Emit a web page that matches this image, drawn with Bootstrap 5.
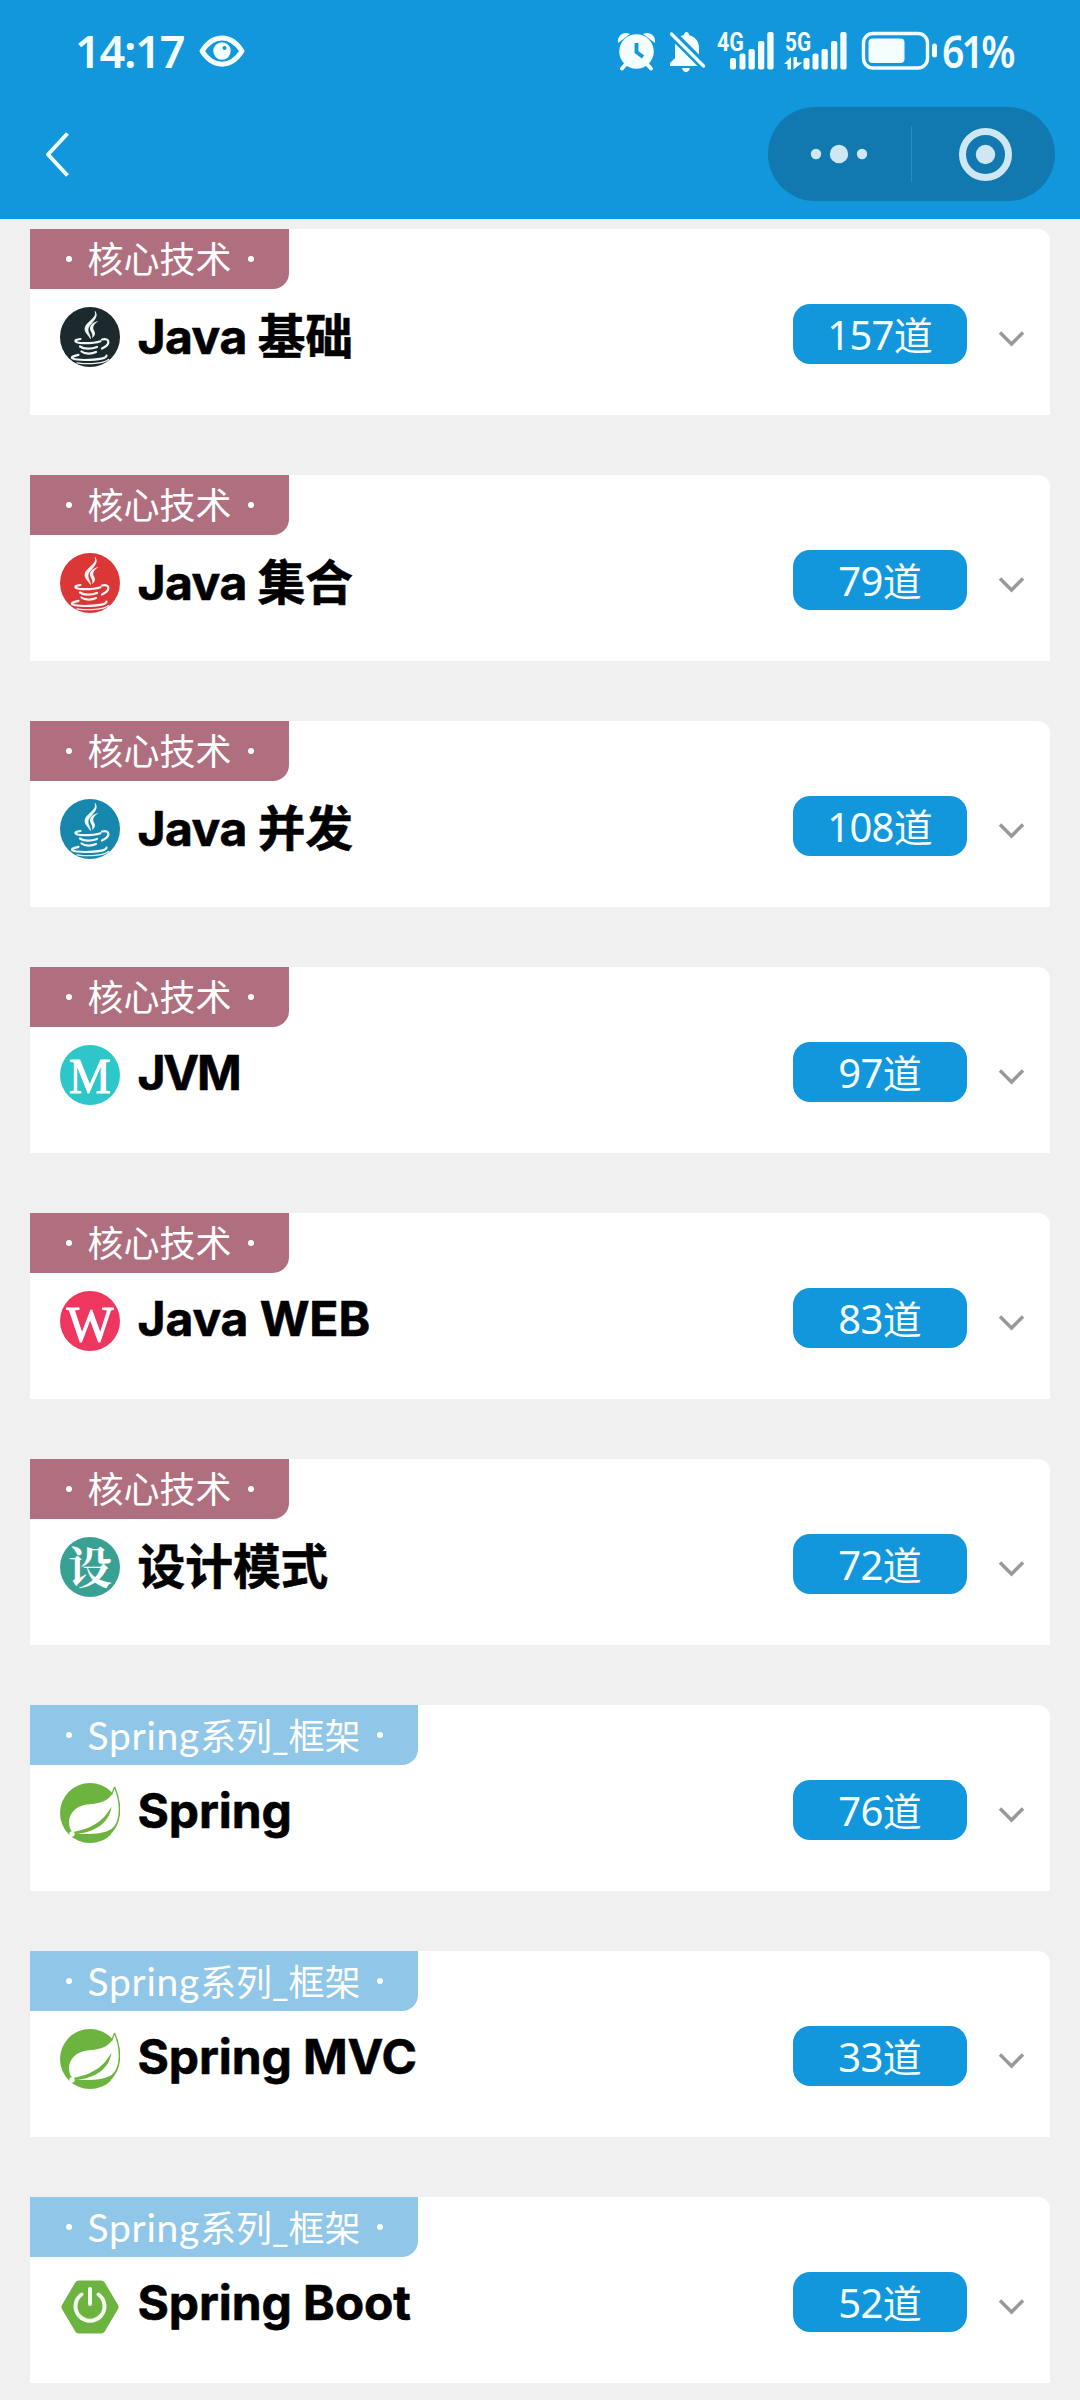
<!DOCTYPE html>
<html lang="zh-CN">
<head>
<meta charset="utf-8">
<meta name="viewport" content="width=device-width, initial-scale=1">
<title>Java 题库</title>
<link href="https://cdn.jsdelivr.net/npm/bootstrap@5.3.0/dist/css/bootstrap.min.css" rel="stylesheet">
<style>
body{background:#f0f0f0;font-family:"Noto Sans","Noto Sans CJK SC",sans-serif;overflow-x:hidden}
svg{display:block;flex:none;overflow:visible}
.topbar{background:#1296dc;height:219px;color:#f4feff}
.statusline{height:102px;padding:0 66px 0 75px}
.clock{font-size:45px;font-weight:600;line-height:60px;letter-spacing:-1.2px;width:124px;white-space:nowrap}
.percent{font-size:45px;font-weight:600;line-height:60px;letter-spacing:-3.2px;margin-left:4px;white-space:nowrap;width:72px;transform:scaleX(.87);transform-origin:0 50%}
.navline{height:117px;padding:5px 25px 18px 44px}
.capsule{width:287px;height:94px;background:#1178b0;border-radius:47px}
.back{margin-top:22px}
.topics{padding:10px 30px 0;gap:60px}
.topic{height:186px;background:#fff;border-radius:0 12px 0 0}
.tag{height:60px;border-radius:0 0 16px 0;font:400 36px/58px "Lato","Noto Sans CJK SC",sans-serif;color:#fff;padding:0 35px 0 36px;white-space:nowrap}
.tag i{width:6px;height:6px;border-radius:50%;background:#fff}
.tag b{font-weight:400;text-align:center;width:147px;margin:0 15px 0 14px}
.core{background:#af6f7f}
.spring{background:#90c7e8}
.spring b{width:276px}
.spring .lat{font-size:39px;letter-spacing:.7px}
.line{padding:15px 25.5px 0 30px}
.name{font:700 48px/61px "Inter","Noto Sans CJK SC",sans-serif;color:#000;margin-left:17.5px;white-space:nowrap;letter-spacing:-.1px;-webkit-text-stroke:.6px #000}
.name.snug{letter-spacing:-2.2px}
.name .han{font:700 47.7px/59px "Noto Sans CJK SC",sans-serif;letter-spacing:0}
.name.mixed{line-height:58px;letter-spacing:-.5px}
.pill{width:174px;height:60px;border-radius:17px;background:#1296dc;color:#f4feff;font:400 40px/58px "Noto Sans","Noto Sans CJK SC",sans-serif;letter-spacing:-.7px;text-align:center;white-space:nowrap}
.pill .han{font:400 39px/58px "Noto Sans CJK SC",sans-serif;letter-spacing:0}
.arrow{margin-left:30.5px;margin-top:26px}
.logo{margin-top:3px}
</style>
<script src="https://cdn.jsdelivr.net/npm/bootstrap@5.3.0/dist/js/bootstrap.bundle.min.js"></script>
</head>
<body>
<svg width="0" height="0" class="position-absolute">
<defs>
<symbol id="java" viewBox="0 0 60 60">
<circle cx="30" cy="30" r="30" fill="currentColor"/>
<g fill="#f2f6f6">
<path d="M35.200 4.500C38 11 25.500 15 25 21.500C24.800 25.500 28 27.500 30.500 31.500C29.800 27 27.500 25 28 22C29 16.500 39.500 11.500 35.200 4.500Z" stroke="#f2f6f6" stroke-width=".8"/>
<path d="M38.500 14C33 15 29.500 18.500 30 22C30.300 25 33.500 26.500 32 31C37 27.500 34.500 24.500 33.500 22.500C32.500 19.500 34.500 16.500 38.500 14Z"/>
</g>
<g fill="none" stroke="#f2f6f6" stroke-width="2.200" stroke-linecap="round">
<path d="M20.500 32C12 33 15 36 23 36.200C30 36.300 36 35.800 40.500 34.200"/>
<path d="M42 32.500C50 30.500 51 37.500 42 41.500"/>
<path d="M20 39.500C24 42.500 32 42 37 40"/>
<path d="M21.500 44.500C25 47.300 32 47 36 45"/>
<path d="M18.500 47.800C6 50.500 13 53 25 53C36 53 46.500 51.500 46.500 48.500"/>
<path d="M17 55.800C28 57.500 43 57 48.500 52.500" stroke-width="1.300"/>
</g>
</symbol>
<symbol id="leaf" viewBox="0 0 60 60">
<circle cx="30" cy="30" r="30" fill="#6db33f"/>
<path d="M50.500 9L54.500 3.500L60 0V60H50L51 50C59 40 61 23 54.500 4Z" fill="#fff"/>
<path d="M51 49C50 53 46 56 42 57.500L40 50Z" fill="#6db33f"/>
<path d="M54.300 4.200C51.500 18 41 20.500 27 21.500C17 22.500 9 30 9 39C9 44 10.500 48 14 50.500C27 51.500 43 51.500 51.500 46C61 38 60 20 54.300 4.200Z" fill="#fff"/>
<path d="M54.500 4C61.500 20 62 38 51 50" fill="none" stroke="#6db33f" stroke-width="1.500"/>
<path d="M54.500 4L51.500 12" fill="none" stroke="#6db33f" stroke-width="1.300"/>
<path d="M51.500 23.500C44 37 34 45.500 10.500 49.500L15 51C34 49.500 49 41 51.500 23.500Z" fill="#6db33f"/>
<circle cx="12" cy="51" r="2.700" fill="#f4fff0"/>
</symbol>
<symbol id="down" viewBox="0 0 27 18"><path d="M2 2.500L13.500 14L25 2.500" fill="none" stroke="#999" stroke-width="3.500"/></symbol>
</defs>
</svg>

<header class="topbar">
<div class="statusline d-flex align-items-center">
<span class="clock">14:17</span>
<svg width="46" height="32" viewBox="0 0 46 32"><path d="M3 16C14-1.500 32-1.500 43 16C32 33.500 14 33.500 3 16Z" fill="none" stroke="currentColor" stroke-width="5" stroke-linejoin="round"/><circle cx="23" cy="16" r="8.700" fill="currentColor"/><circle cx="25.500" cy="13" r="2" fill="#1296dc"/></svg>
<svg class="ms-auto" width="320" height="64" viewBox="618 19 320 64" fill="currentColor">
<circle cx="636.500" cy="51.500" r="17.300"/>
<path d="M618 43C617 35 624 31 630 34ZM655 43C656 35 649 31 643 34Z"/>
<path d="M627 63L622 68.500M646 63L651 68.500" stroke="currentColor" stroke-width="4" stroke-linecap="round"/>
<path d="M636.500 43V52L643 57" fill="none" stroke="#1296dc" stroke-width="3.800"/>
<path d="M670 66V63L675 58V46C675 39 679 36 684 35C684 31 689 31 689 35C696 37 699 42 699 48V58L703 62V66ZM682 68H690C689 73.500 683 73.500 682 68Z"/>
<path d="M668 30L708 70" stroke="#1296dc" stroke-width="9"/>
<path d="M671.500 34L703.500 66" stroke="currentColor" stroke-width="3.300" stroke-linecap="round"/>
<text x="717" y="50.500" font-family="Roboto,sans-serif" font-weight="700" font-size="26" textLength="27" lengthAdjust="spacingAndGlyphs">4G</text>
<text x="785" y="50.500" font-family="Roboto,sans-serif" font-weight="700" font-size="26" textLength="26" lengthAdjust="spacingAndGlyphs">5G</text>
<g><rect x="730" y="58" width="6" height="11.500" rx="2"/><rect x="739.500" y="53.500" width="6" height="16" rx="2"/><rect x="748.500" y="49" width="6.300" height="20.500" rx="2"/><rect x="758" y="41" width="6.300" height="28.500" rx="2"/><rect x="767.300" y="32" width="6.300" height="37.500" rx="2"/></g>
<g><rect x="803.500" y="58" width="6" height="11.500" rx="2"/><rect x="812.500" y="53.500" width="6" height="16" rx="2"/><rect x="821.500" y="49" width="6.300" height="20.500" rx="2"/><rect x="831" y="41" width="6.300" height="28.500" rx="2"/><rect x="840.300" y="32" width="6.300" height="37.500" rx="2"/></g>
<path d="M784 64L791 57V69.500H787.500V64ZM793.500 57H797V62.500H802.500L793.500 69.500Z"/>
<rect x="863.500" y="33.500" width="64" height="34.500" rx="9.500" fill="none" stroke="currentColor" stroke-width="3.400"/>
<rect x="868.500" y="38.500" width="36" height="24.500" rx="4"/>
<rect x="932" y="43.500" width="5" height="14" rx="2.500"/>
</svg>
<span class="percent">61%</span>
</div>
<div class="navline d-flex justify-content-between align-items-start">
<svg class="back" width="28" height="52" viewBox="44 129 28 52"><path d="M67.500 133.500L48 154.500L67.500 175.500" fill="none" stroke="currentColor" stroke-width="4" stroke-linejoin="round"/></svg>
<div class="capsule">
<svg width="287" height="94" viewBox="768 107 287 94"><g fill="#cfe6f3"><circle cx="816" cy="154" r="5.200"/><circle cx="839" cy="154" r="9.200"/><circle cx="862" cy="154" r="5.200"/><circle cx="985.500" cy="154.500" r="9.700"/></g><circle cx="985.500" cy="154.500" r="23" fill="none" stroke="#cfe6f3" stroke-width="7"/><path d="M911.500 126V182" stroke="#2b8abf" stroke-width="1"/></svg>
</div>
</div>
</header>

<main class="topics d-flex flex-column">
<section class="topic">
<div class="tag core d-inline-flex align-items-center"><i></i><b>核心技术</b><i></i></div>
<div class="line d-flex"><svg class="logo" width="60" height="60" color="#1c2a2d"><use href="#java"/></svg><div class="name mixed">Java <span class="han">基础</span></div><div class="pill ms-auto">157<span class="han">道</span></div><svg class="arrow" width="27" height="18"><use href="#down"/></svg></div>
</section>
<section class="topic">
<div class="tag core d-inline-flex align-items-center"><i></i><b>核心技术</b><i></i></div>
<div class="line d-flex"><svg class="logo" width="60" height="60" color="#dc3737"><use href="#java"/></svg><div class="name mixed">Java <span class="han">集合</span></div><div class="pill ms-auto">79<span class="han">道</span></div><svg class="arrow" width="27" height="18"><use href="#down"/></svg></div>
</section>
<section class="topic">
<div class="tag core d-inline-flex align-items-center"><i></i><b>核心技术</b><i></i></div>
<div class="line d-flex"><svg class="logo" width="60" height="60" color="#1787ad"><use href="#java"/></svg><div class="name mixed">Java <span class="han">并发</span></div><div class="pill ms-auto">108<span class="han">道</span></div><svg class="arrow" width="27" height="18"><use href="#down"/></svg></div>
</section>
<section class="topic">
<div class="tag core d-inline-flex align-items-center"><i></i><b>核心技术</b><i></i></div>
<div class="line d-flex"><svg class="logo" width="60" height="60" viewBox="0 0 60 60"><circle cx="30" cy="30" r="30" fill="#2ec7c9"/><text x="9" y="47.500" font-family="Liberation Serif,serif" font-size="50" fill="#fff" stroke="#fff" stroke-width="1" textLength="42" lengthAdjust="spacingAndGlyphs">M</text></svg><div class="name snug">JVM</div><div class="pill ms-auto">97<span class="han">道</span></div><svg class="arrow" width="27" height="18"><use href="#down"/></svg></div>
</section>
<section class="topic">
<div class="tag core d-inline-flex align-items-center"><i></i><b>核心技术</b><i></i></div>
<div class="line d-flex"><svg class="logo" width="60" height="60" viewBox="0 0 60 60"><circle cx="30" cy="30" r="30" fill="#ee365f"/><text x="6.500" y="50" font-family="Liberation Serif,serif" font-size="50" fill="#fff" stroke="#fff" stroke-width="1" textLength="47" lengthAdjust="spacingAndGlyphs">W</text></svg><div class="name">Java WEB</div><div class="pill ms-auto">83<span class="han">道</span></div><svg class="arrow" width="27" height="18"><use href="#down"/></svg></div>
</section>
<section class="topic">
<div class="tag core d-inline-flex align-items-center"><i></i><b>核心技术</b><i></i></div>
<div class="line d-flex"><svg class="logo" width="60" height="60" viewBox="0 0 60 60"><circle cx="30" cy="30" r="30" fill="#39a194"/><text x="8" y="47" font-family="Noto Serif CJK SC,Noto Sans CJK SC,serif" font-weight="700" font-size="44" fill="#fff">设</text></svg><div class="name mixed"><span class="han">设计模式</span></div><div class="pill ms-auto">72<span class="han">道</span></div><svg class="arrow" width="27" height="18"><use href="#down"/></svg></div>
</section>
<section class="topic">
<div class="tag spring d-inline-flex align-items-center"><i></i><b><span class="lat">Spring</span>系列_框架</b><i></i></div>
<div class="line d-flex"><svg class="logo" width="60" height="60"><use href="#leaf"/></svg><div class="name">Spring</div><div class="pill ms-auto">76<span class="han">道</span></div><svg class="arrow" width="27" height="18"><use href="#down"/></svg></div>
</section>
<section class="topic">
<div class="tag spring d-inline-flex align-items-center"><i></i><b><span class="lat">Spring</span>系列_框架</b><i></i></div>
<div class="line d-flex"><svg class="logo" width="60" height="60"><use href="#leaf"/></svg><div class="name">Spring MVC</div><div class="pill ms-auto">33<span class="han">道</span></div><svg class="arrow" width="27" height="18"><use href="#down"/></svg></div>
</section>
<section class="topic">
<div class="tag spring d-inline-flex align-items-center"><i></i><b><span class="lat">Spring</span>系列_框架</b><i></i></div>
<div class="line d-flex"><svg class="logo" width="60" height="60" viewBox="0 0 60 60"><path d="M19 8H41L54 30L41 52H19L6 30Z" transform="translate(0 2)" fill="#6db33f" stroke="#6db33f" stroke-width="9" stroke-linejoin="round"/><path d="M21.500 19.500A14.500 14.500 0 1 0 38.500 19.500M30 14V29" fill="none" stroke="#f4fff0" stroke-width="4" stroke-linecap="round"/></svg><div class="name">Spring Boot</div><div class="pill ms-auto">52<span class="han">道</span></div><svg class="arrow" width="27" height="18"><use href="#down"/></svg></div>
</section>
</main>
</body>
</html>
